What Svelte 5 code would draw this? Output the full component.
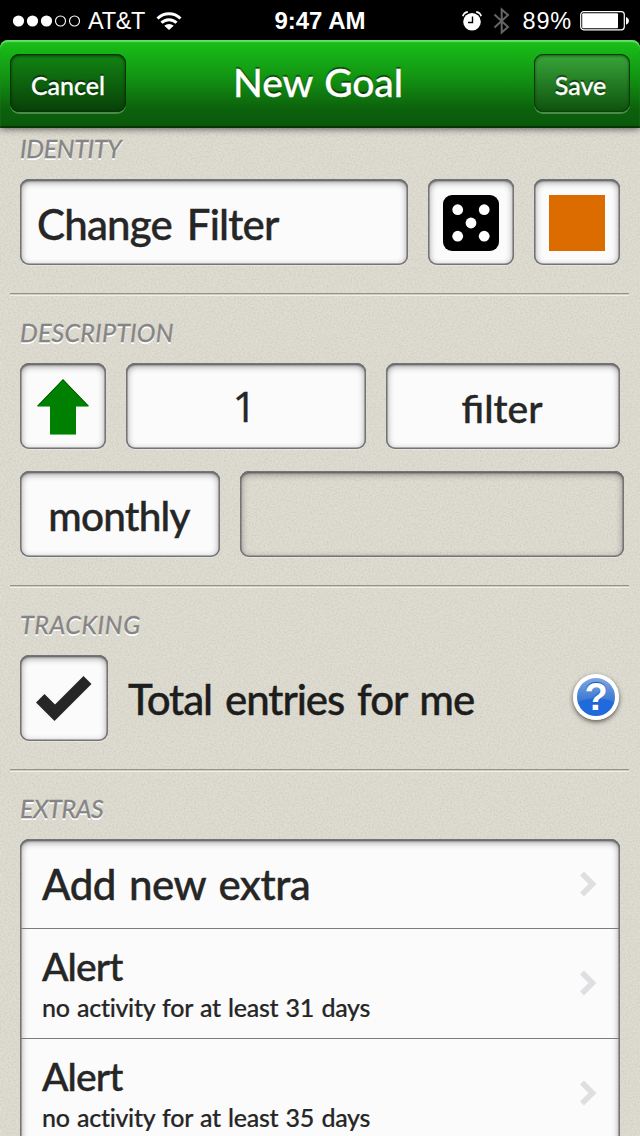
<script>
  const extras = [
    { title: 'Alert', note: 'no activity for at least', days: 31 },
    { title: 'Alert', note: 'no activity for at least', days: 35 }
  ];
</script>

{#snippet chevron()}
  <svg class="chevron" width="18" height="28" viewBox="0 0 18 28"><path d="M3 3.5 13.5 14 3 24.5" fill="none" stroke="#dfdfe1" stroke-width="5.6" /></svg>
{/snippet}

<div class="screen">
  <div class="status">
    <div class="left">
      <svg width="68" height="14" viewBox="0 0 68 14">
        <g fill="#fff"><circle cx="5.5" cy="7" r="5.6" /><circle cx="19.5" cy="7" r="5.6" /><circle cx="33.5" cy="7" r="5.6" /></g>
        <g fill="none" stroke="#fff" stroke-width="1.1"><circle cx="47.5" cy="7" r="5" /><circle cx="61.5" cy="7" r="5" /></g>
      </svg>
      <span class="carrier">AT&amp;T</span>
      <svg class="wifi" width="26" height="20" viewBox="0 0 26 20">
        <g fill="none" stroke="#fff" stroke-width="3"><path d="M1.5 7.5a16.3 16.3 0 0 1 23 0" /><path d="M5.5 11.8a10.6 10.6 0 0 1 15 0" /></g>
        <path d="M13 19 8.3 14.8a6.8 6.8 0 0 1 9.4 0Z" fill="#fff" />
      </svg>
    </div>
    <div class="time">9:47 AM</div>
    <div class="right">
      <svg width="20" height="20" viewBox="0 0 20 20">
        <circle cx="10" cy="10.7" r="8.8" fill="#fff" />
        <path d="M.8 5.2A6 6 0 0 1 5.8.9M14.2.9a6 6 0 0 1 5 4.3" fill="none" stroke="#fff" stroke-width="1.6" />
        <path d="M10.5 5.5v6H6" fill="none" stroke="#000" stroke-width="1.4" />
      </svg>
      <svg class="bt" width="18" height="28" viewBox="0 0 18 28"><path d="M1.5 7.5 15 20 8.7 25.6V2.4L15 8 1.5 20.5" fill="none" stroke="#656565" stroke-width="2" /></svg>
      <span class="percent">89%</span>
      <svg width="50" height="20" viewBox="0 0 50 20">
        <rect x=".7" y=".7" width="43.6" height="18.1" rx="3" fill="none" stroke="#fff" stroke-width="1.2" />
        <rect x="2.2" y="2.2" width="35.8" height="15.1" rx="1" fill="#fff" />
        <path d="M46 6.2h.6q2.4 1 2.4 3.6t-2.4 3.6H46Z" fill="#fff" />
      </svg>
    </div>
  </div>

  <header>
    <button class="cancel">Cancel</button>
    <h1>New Goal</h1>
    <button class="save">Save</button>
  </header>

  <main>
    <section class="first">
      <h2 class="identity">IDENTITY</h2>
      <div class="row">
        <div class="field name"><span>Change Filter</span></div>
        <div class="field icon">
          <svg width="56" height="56" viewBox="0 0 56 56">
            <rect width="56" height="56" rx="9" />
            <g fill="#fff"><circle cx="14.7" cy="14.7" r="5.4" /><circle cx="41.2" cy="14.7" r="5.4" /><circle cx="28" cy="28" r="5.4" /><circle cx="14.7" cy="41.2" r="5.4" /><circle cx="41.2" cy="41.2" r="5.4" /></g>
          </svg>
        </div>
        <div class="field icon"><div class="swatch"></div></div>
      </div>
    </section>
    <hr />
    <section>
      <h2 class="description">DESCRIPTION</h2>
      <div class="row">
        <div class="field icon">
          <svg width="52" height="56" viewBox="0 0 52 56">
            <path d="M0 28 26 1l26 27H39v28H13V28Z" fill="#69c069" />
            <path d="M0 27 26 0l26 27H39v28H13V27Z" fill="#008000" />
            <path d="M.8 27 26 .8 51.2 27" fill="none" stroke="#005d00" />
          </svg>
        </div>
        <div class="field amount"><span>1</span></div>
        <div class="field unit"><span>filter</span></div>
      </div>
      <div class="row second">
        <div class="field period"><span>monthly</span></div>
        <div class="field empty"></div>
      </div>
    </section>
    <hr />
    <section>
      <h2 class="tracking">TRACKING</h2>
      <div class="row">
        <div class="field check">
          <svg width="56" height="46" viewBox="0 0 56 46"><path d="M0 26.5 8.5 18 19 28.5 47.5 0 55.5 8 18.5 45Z" fill="#262626" /></svg>
        </div>
        <div class="total">Total entries for me</div>
        <div class="help">?</div>
      </div>
    </section>
    <hr />
    <section>
      <h2 class="extras">EXTRAS</h2>
      <div class="list">
        <div class="item add"><span>Add new extra</span>{@render chevron()}</div>
        {#each extras as extra}
          <div class="item alert">
            <div>
              <div class="title">{extra.title}</div>
              <div class="note">{extra.note} {extra.days} days</div>
            </div>
            {@render chevron()}
          </div>
        {/each}
      </div>
    </section>
  </main>
</div>

<style>
  :global(body) { margin: 0; background: #000; }
  .screen {
    width: 640px; height: 1136px; overflow: hidden; display: flex; flex-direction: column;
    font-family: Lato, sans-serif; color: #262626; background: #000;
  }
  .status {
    height: 40px; flex: none; box-sizing: border-box; padding: 0 10px 0 13px; color: #fff;
    display: grid; grid-template-columns: 1fr auto 1fr; align-items: center;
    font: 23.5px/40px "Liberation Sans", sans-serif;
  }
  .left, .right { display: flex; align-items: center; }
  .right { justify-content: flex-end; }
  .carrier { margin-left: 7px; letter-spacing: -.3px; padding-top: 1px; }
  .wifi { margin-left: 11px; }
  .time { font-weight: bold; font-size: 24px; padding: 1px 3px 0 0; }
  .bt { margin-left: 11px; }
  .percent { margin: 0 8px 0 12px; letter-spacing: .8px; padding-top: 1px; }
  header {
    height: 88px; flex: none; box-sizing: border-box; padding: 14px 10px 0; border-radius: 8px 8px 0 0;
    display: grid; grid-template-columns: 1fr auto 1fr; align-items: start; position: relative; z-index: 1;
    background: linear-gradient(#19c119, #139713 40%, #0c620c 78%, #0a580a);
    box-shadow: inset 0 2px 1px #69dc69, inset 0 -2px 1px #043504, 0 1px 7px #0009;
    color: #fff; text-shadow: 0 -2px 1px #0008;
  }
  button {
    height: 58px; border: 0; border-radius: 9px; color: #fff; font: 500 25px/54px Lato, sans-serif;
    padding: 4px 0 0; text-shadow: 0 -2px 1px #0008; -webkit-text-stroke: .3px;
  }
  .cancel {
    width: 116px; justify-self: start; background: linear-gradient(#128512, #093f09);
    box-shadow: inset 0 1px 3px 1px #022b02cc, inset 0 0 0 1px #063d06, 0 2px 0 #fff4;
  }
  .save {
    width: 96px; justify-self: end; padding-right: 3px; background: linear-gradient(#39a639, #0e520e);
    box-shadow: inset 0 1px 3px 1px #022b0299, inset 0 0 0 1px #0b4b0b, 0 2px 0 #fff4;
  }
  h1 { margin: 0; padding-right: 4px; font-weight: 500; font-size: 39px; line-height: 57px; letter-spacing: -.1px; word-spacing: 2px; -webkit-text-stroke: .3px; }
  main {
    flex: 1; min-height: 0; padding-top: 5px;
    background: url("data:image/svg+xml,%3Csvg xmlns='http://www.w3.org/2000/svg' width='256' height='256'%3E%3Cfilter id='n' x='0' y='0' width='100%25' height='100%25'%3E%3CfeTurbulence type='fractalNoise' baseFrequency='.6' numOctaves='3' stitchTiles='stitch'/%3E%3CfeColorMatrix values='0 0 0 0 .42 0 0 0 0 .39 0 0 0 0 .34 .6 0 0 0 -.22'/%3E%3C/filter%3E%3Crect width='256' height='256' filter='url(%23n)'/%3E%3C/svg%3E"), #dfddd2;
  }
  section { padding: 21px 20px 0; }
  section.first { padding-top: 0; }
  h2 {
    margin: 0 0 16px; height: 30px; font: italic 400 25px/30px Lato, sans-serif;
    color: #858585; text-shadow: 0 2px 0 #fff; -webkit-text-stroke: .3px;
  }
  .identity { letter-spacing: -.35px; }
  .description { letter-spacing: .2px; }
  .tracking { letter-spacing: .6px; }
  .extras { letter-spacing: -.3px; }
  hr {
    height: 3px; border: 0; margin: 28px 11px 0 10px;
    background: linear-gradient(#92948a 1px, #cbcdc2 1px 2px, #efefe7 2px);
  }
  .row { display: flex; gap: 20px; }
  .second { margin-top: 22px; }
  .field {
    height: 86px; flex: none; box-sizing: border-box; border-radius: 9px; background: #fbfbfb;
    display: flex; align-items: center; justify-content: center; font-weight: 500; font-size: 42px; line-height: 84px;
    -webkit-text-stroke: .4px;
    box-shadow: inset 0 0 0 1.5px #747478, inset 0 2px 2px #0009, inset 0 2px 7px 1px #0006, 0 1px 0 #fff5;
  }
  .name { width: 388px; justify-content: flex-start; padding: 3px 0 0 17px; letter-spacing: -.8px; word-spacing: 5px; }
  .icon { width: 86px; padding-top: 2px; }
  .swatch { width: 56px; height: 56px; background: #dc6c00; }
  .amount { width: 240px; padding-right: 3px; }
  .amount span { font-family: "Open Sans", sans-serif; font-weight: 500; }
  .unit { width: 234px; font-size: 39px; padding: 3px 2px 0 0; }
  .period { width: 200px; font-size: 40.5px; letter-spacing: -.8px; padding: 3px 2px 0 0; }
  .empty { width: 384px; background: transparent; }
  .check { width: 88px; padding-top: 2px; }
  .total { flex: 1; font-size: 42px; font-weight: 500; line-height: 89px; height: 86px; color: #1d1d1d; white-space: nowrap; letter-spacing: -1.1px; word-spacing: 3.5px; -webkit-text-stroke: .4px; }
  .help {
    width: 38px; height: 38px; border: 4px solid #fff; border-radius: 50%; margin: 19px 1px 0 0;
    background: radial-gradient(ellipse 28px 18px at 50% 100%, #206bdc 98%, transparent), linear-gradient(#7fa8e3, #3c77cf 60%);
    box-shadow: 0 2px 5px #0009; color: #fff; font: bold 38px/39px "Liberation Sans", sans-serif;
    text-align: center; text-shadow: 0 -1px 1px #1753b5;
  }
  .list {
    height: 320px; border-radius: 9px 9px 0 0; background: #fbfbfb;
    box-shadow: inset 0 0 0 1.5px #747478, inset 0 2px 2px #0009, inset 0 2px 7px 1px #0006;
  }
  .item {
    box-sizing: border-box; margin: 0 1px; padding: 0 22px 0 21px; font-weight: 500;
    display: flex; align-items: center; justify-content: space-between; -webkit-text-stroke: .4px;
  }
  .add { height: 89px; font-size: 42px; line-height: 89px; letter-spacing: -.5px; word-spacing: 3px; }
  .add span { padding-top: 2px; }
  .alert { height: 110px; border-top: 1px solid #7c7c7c; }
  .alert .chevron { margin-bottom: 2px; }
  .title { font-size: 39px; line-height: 46px; letter-spacing: -.9px; }
  .note { font-size: 25px; line-height: 36px; letter-spacing: -.3px; word-spacing: 1.4px; -webkit-text-stroke: .2px; }
</style>
